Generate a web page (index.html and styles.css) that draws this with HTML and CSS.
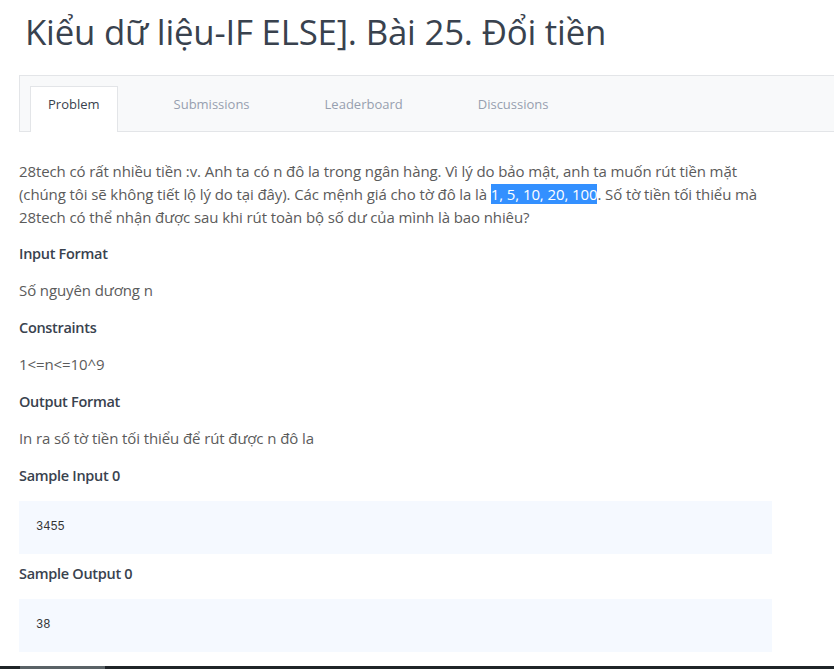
FILE: index.html
```html
<!DOCTYPE html>
<html lang="vi">
<head>
<meta charset="utf-8">
<title>Bài 25. Đổi tiền</title>
<link rel="stylesheet" href="styles.css">
</head>
<body>
<div class="page">
  <h1 class="title">Kiểu dữ liệu-IF ELSE]. Bài 25. Đổi tiền</h1>
  <nav class="tabs">
    <a class="tab active">Problem</a>
    <a class="tab">Submissions</a>
    <a class="tab">Leaderboard</a>
    <a class="tab">Discussions</a>
  </nav>
  <section class="content">
    <p class="text intro">28tech có rất nhiều tiền :v. Anh ta có n đô la trong ngân hàng. Vì lý do bảo mật, anh ta muốn rút tiền mặt (chúng tôi sẽ không tiết lộ lý do tại đây). Các mệnh giá cho tờ đô la là <span class="sel">1, 5, 10, 20, 100</span>. Số tờ tiền tối thiểu mà 28tech có thể nhận được sau khi rút toàn bộ số dư của mình là bao nhiêu?</p>
    <h2 class="head">Input Format</h2>
    <p class="text">Số nguyên dương n</p>
    <h2 class="head">Constraints</h2>
    <p class="text">1&lt;=n&lt;=10^9</p>
    <h2 class="head">Output Format</h2>
    <p class="text">In ra số tờ tiền tối thiểu để rút được n đô la</p>
    <h2 class="head">Sample Input 0</h2>
    <pre class="code">3455</pre>
    <h2 class="head">Sample Output 0</h2>
    <pre class="code">38</pre>
  </section>
</div>
<div class="taskbar"><span class="seg"></span></div>
</body>
</html>
```
FILE: styles.css
```css
html, body {
  margin: 0;
  padding: 0;
  background: #fff;
  overflow: hidden;
}
body {
  font-family: "Open Sans", "Noto Sans", sans-serif;
  color: #576871;
  height: 669px;
  position: relative;
}
.page {
  padding-left: 19px;
}
.title {
  margin: 0;
  padding: 9px 0 0 6px;
  font-size: 34.8px;
  font-weight: 400;
  line-height: 46px;
  color: #39424e;
  letter-spacing: -0.2px;
  height: 66px;
}
.tabs {
  display: flex;
  align-items: flex-end;
  height: 55px;
  background: #f8f9fa;
  border-top: 1px solid #e3e5e8;
  border-bottom: 1px solid #e3e5e8;
  border-left: 1px solid #e3e5e8;
  padding-left: 10px;
}
.tab {
  display: block;
  font-size: 13px;
  color: #979faf;
  height: 45px;
  line-height: 34px;
  padding: 0 18px 0 17px;
  margin-right: 38px;
  margin-bottom: -1px;
  border: 1px solid transparent;
  border-bottom: none;
}
.tab.active {
  background: #fff;
  color: #39424e;
  border-color: #e3e5e8;
  padding-right: 17px;
}
.content {
  width: 753px;
  padding-top: 28px;
}
.text {
  margin: 0 0 14px;
  font-size: 15px;
  line-height: 23px;
  color: #5b5b5b;
  letter-spacing: -0.1px;
}
.intro { margin-bottom: 13px; }
.sel {
  background: #3390ff;
  color: #fff;
}
.head {
  margin: 0 0 14px;
  font-size: 14.5px;
  font-weight: 600;
  line-height: 23px;
  color: #39424e;
  letter-spacing: -0.3px;
}
.code {
  margin: 0 0 8px;
  background: #f5f9ff;
  height: 53px;
  box-sizing: border-box;
  padding: 0 17px;
  line-height: 53px;
  font-family: "Liberation Mono", monospace;
  font-size: 12px;
  color: #333;
}
.taskbar {
  position: absolute;
  left: 0;
  right: 0;
  bottom: 0;
  height: 3px;
  background: #1f2428;
}
.taskbar .seg {
  display: block;
  margin-left: 20px;
  width: 85px;
  height: 3px;
  background: #5a6266;
}
```
